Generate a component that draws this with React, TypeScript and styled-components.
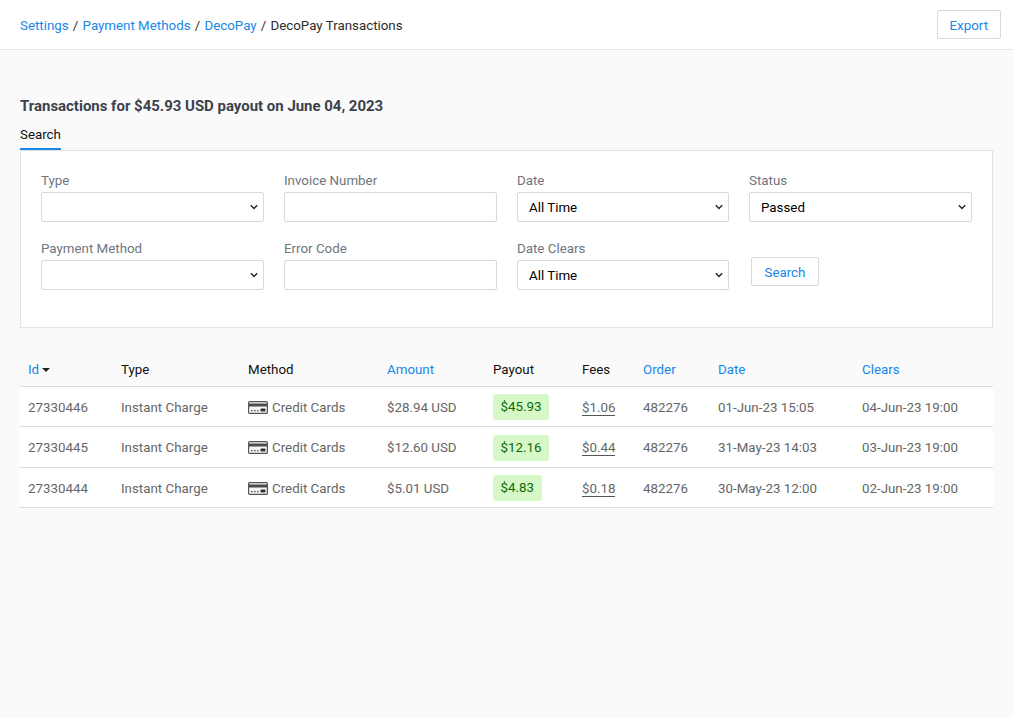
import React from "react";
import styled, { createGlobalStyle } from "styled-components";

const GlobalStyle = createGlobalStyle`
  html, body {
    margin: 0;
    padding: 0;
    min-height: 100%;
    background: #fafafa;
    font-family: Roboto, "Liberation Sans", sans-serif;
    font-size: 13.33px;
    color: #666;
  }
`;

const Page = styled.div`
  min-height: 718px;
  background: #fafafa;
`;

const Header = styled.header`
  height: 49px;
  box-sizing: content-box;
  background: #fff;
  border-bottom: 1px solid #e6e6e6;
  display: flex;
  align-items: center;
  justify-content: space-between;
  padding: 0 12px 0 20px;
`;

const Crumbs = styled.nav`
  display: flex;
  align-items: center;
  gap: 4.2px;
  padding-top: 2px;
  color: #333;
`;

const Crumb = styled.a`
  color: #1787e8;
  text-decoration: none;
`;

const Current = styled.span`
  color: #2b2b2b;
`;

const OutlineButton = styled.button`
  height: 29px;
  padding: 1px 12.5px 0;
  box-sizing: border-box;
  background: #fff;
  border: 1px solid #d9d9d9;
  border-radius: 2px;
  color: #1787e8;
  font: inherit;
`;

const ExportButton = styled(OutlineButton)`
  padding: 1px 12px 0;
`;

const Main = styled.main`
  padding: 47px 20px 0;
`;

const Title = styled.h1`
  margin: 0;
  font-size: 14.96px;
  line-height: 18px;
  font-weight: 700;
  color: #3b424d;
`;

const Tabs = styled.div`
  display: flex;
  margin-top: 10px;
`;

const Tab = styled.div`
  height: 23px;
  line-height: 19px;
  color: #111;
  border-bottom: 2px solid #1787e8;
`;

const Panel = styled.section`
  background: #fff;
  border: 1px solid #e3e3e3;
  height: 178px;
  box-sizing: border-box;
  padding: 21px 20px 0;
  display: grid;
  grid-template-columns: 223px 213px 212px 223px;
  grid-auto-rows: 50px;
  column-gap: 20px;
  row-gap: 18px;
`;

const Field = styled.label`
  display: flex;
  flex-direction: column;
  justify-content: flex-end;
  color: #6f7680;
  gap: 3px;
  line-height: 16px;
`;

const Select = styled.select`
  height: 30px;
  box-sizing: border-box;
  width: 100%;
  background: #fff url("data:image/svg+xml,%3Csvg xmlns='http://www.w3.org/2000/svg' width='8' height='6' viewBox='0 0 8 6'%3E%3Cpath d='M.8 1.2 4 4.4l3.2-3.2' fill='none' stroke='%23222' stroke-width='1.4'/%3E%3C/svg%3E") no-repeat right 5px center;
  appearance: none;
  border: 1px solid #d9d9d9;
  border-radius: 2px;
  padding: 2px 11px 0;
  font: inherit;
  color: #000;
  outline: none;
`;

const Input = styled.input`
  height: 30px;
  box-sizing: border-box;
  width: 100%;
  background: #fff;
  border: 1px solid #d9d9d9;
  border-radius: 2px;
  padding: 0 8px;
  font: inherit;
`;

const SearchCell = styled.div`
  display: flex;
  align-items: flex-start;
  padding: 17px 0 0 2px;
`;

const Table = styled.table`
  margin-top: 24px;
  width: 973px;
  table-layout: fixed;
  border-collapse: collapse;
`;

const Th = styled.th<{ $sort?: boolean; $w: number }>`
  width: ${(p) => p.$w}px;
  box-sizing: border-box;
  height: 34px;
  padding: 2px 0 0 8px;
  text-align: left;
  font-weight: 400;
  color: ${(p) => (p.$sort ? "#1787e8" : "#111")};
  border-bottom: 1px solid #dcdcdc;
`;

const Row = styled.tr`
  background: #fff;
  border-bottom: 1px solid #dcdcdc;
`;

const Td = styled.td`
  box-sizing: border-box;
  height: 40.5px;
  padding: 2px 0 0 8px;
  color: #666;
  white-space: nowrap;
`;

const Caret = styled.span`
  display: inline-block;
  margin-left: 3px;
  vertical-align: 2px;
  border-left: 4px solid transparent;
  border-right: 4px solid transparent;
  border-top: 4px solid #222;
`;

const MethodCell = styled.span`
  display: flex;
  align-items: center;
  gap: 4px;
`;

const Badge = styled.span`
  display: inline-block;
  padding: 0 8px 0 7.5px;
  height: 26px;
  line-height: 26px;
  border-radius: 3px;
  background: #d6f8c6;
  color: #0a6b0a;
`;

const FeeLink = styled.a`
  color: #666;
  text-decoration: none;
  border-bottom: 1px solid #555;
`;

const CardIcon = () => (
  <svg width="20" height="13" viewBox="0 0 20 13">
    <rect x="0.6" y="0.6" width="18.8" height="11.8" rx="1" fill="#f4f4f4" stroke="#555" strokeWidth="1.2" />
    <rect x="1" y="2.5" width="18" height="3" fill="#4a4a4a" />
    <rect x="12.5" y="7.5" width="5" height="3" rx="1" fill="#333" />
    <rect x="3" y="9" width="1.6" height="1.2" fill="#555" />
    <rect x="6" y="9" width="1.6" height="1.2" fill="#555" />
    <rect x="9" y="9" width="1.6" height="1.2" fill="#555" />
  </svg>
);

const rows = [
  { id: "27330446", amount: "$28.94 USD", payout: "$45.93", fees: "$1.06", date: "01-Jun-23 15:05", clears: "04-Jun-23 19:00" },
  { id: "27330445", amount: "$12.60 USD", payout: "$12.16", fees: "$0.44", date: "31-May-23 14:03", clears: "03-Jun-23 19:00" },
  { id: "27330444", amount: "$5.01 USD", payout: "$4.83", fees: "$0.18", date: "30-May-23 12:00", clears: "02-Jun-23 19:00" },
];

function App() {
  return (
    <Page>
      <GlobalStyle />
      <Header>
        <Crumbs>
          <Crumb href="#">Settings</Crumb>/<Crumb href="#">Payment Methods</Crumb>/<Crumb href="#">DecoPay</Crumb>/
          <Current>DecoPay Transactions</Current>
        </Crumbs>
        <ExportButton>Export</ExportButton>
      </Header>
      <Main>
        <Title>Transactions for $45.93 USD payout on June 04, 2023</Title>
        <Tabs>
          <Tab>Search</Tab>
        </Tabs>
        <Panel>
          <Field>
            Type
            <Select defaultValue="">
              <option value=""></option>
            </Select>
          </Field>
          <Field>
            Invoice Number
            <Input />
          </Field>
          <Field>
            Date
            <Select>
              <option>All Time</option>
            </Select>
          </Field>
          <Field>
            Status
            <Select>
              <option>Passed</option>
            </Select>
          </Field>
          <Field>
            Payment Method
            <Select defaultValue="">
              <option value=""></option>
            </Select>
          </Field>
          <Field>
            Error Code
            <Input />
          </Field>
          <Field>
            Date Clears
            <Select>
              <option>All Time</option>
            </Select>
          </Field>
          <SearchCell>
            <OutlineButton>Search</OutlineButton>
          </SearchCell>
        </Panel>
        <Table>
          <thead>
            <tr>
              <Th $sort $w={93}>
                Id
                <Caret />
              </Th>
              <Th $w={127}>Type</Th>
              <Th $w={139}>Method</Th>
              <Th $sort $w={106}>Amount</Th>
              <Th $w={89}>Payout</Th>
              <Th $w={61}>Fees</Th>
              <Th $sort $w={75}>Order</Th>
              <Th $sort $w={144}>Date</Th>
              <Th $sort $w={139}>Clears</Th>
            </tr>
          </thead>
          <tbody>
            {rows.map((r) => (
              <Row key={r.id}>
                <Td>{r.id}</Td>
                <Td>Instant Charge</Td>
                <Td>
                  <MethodCell>
                    <CardIcon />
                    Credit Cards
                  </MethodCell>
                </Td>
                <Td>{r.amount}</Td>
                <Td>
                  <Badge>{r.payout}</Badge>
                </Td>
                <Td>
                  <FeeLink href="#">{r.fees}</FeeLink>
                </Td>
                <Td>482276</Td>
                <Td>{r.date}</Td>
                <Td>{r.clears}</Td>
              </Row>
            ))}
          </tbody>
        </Table>
      </Main>
    </Page>
  );
}

export default App;
